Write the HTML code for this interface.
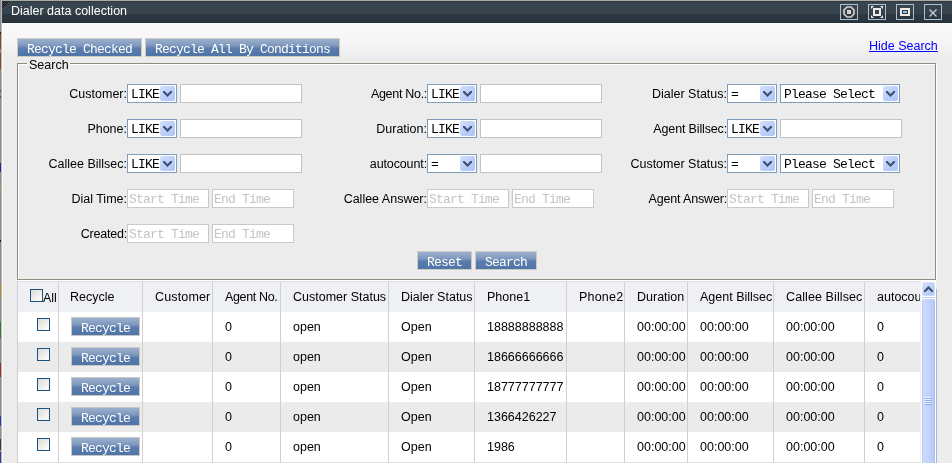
<!DOCTYPE html>
<html><head><meta charset="utf-8">
<style>
*{box-sizing:border-box;margin:0;padding:0}
html,body{width:952px;height:463px;overflow:hidden;background:#b8b8b8;font-family:"Liberation Sans",sans-serif;font-size:12.5px;color:#000}
.a{position:absolute}
#lb{left:0;top:0;width:2px;height:463px;background:linear-gradient(90deg,#8e8e8e 0,#8e8e8e 1px,#b9b9b9 1px)}
#topl{left:0;top:0;width:952px;height:1px;background:#aba9a6}
#tb{left:2px;top:1px;width:950px;height:22px;background:linear-gradient(180deg,#2f3b43 0,#2f3b43 1px,#38454e 1px,#36434c 13px,#2c373f 13px,#2a353d 21px,#222c33 21px)}
#tt{left:11px;top:1px;height:20px;line-height:20px;color:#fff;font-size:12.5px}
.ib{top:4px;width:18px;height:16px;border:1px solid #aebed3}
#body{left:2px;top:23px;width:950px;height:440px;border-top:1px solid #fcfcfc;border-left:1px solid #fcfcfc;background:linear-gradient(180deg,#f8f8f8 0,#f7f7f7 14px,#f0f0f0 28px,#ececec 36px,#ececec 100%)}
.btn{height:19px;border:1px solid #cfcbc3;background:linear-gradient(180deg,#9db1cd 0,#7d97bd 40%,#5b7dac 55%,#4f74a6 100%);color:#fff;font-family:"Liberation Mono",monospace;font-size:13px;letter-spacing:-0.8px;line-height:17px;padding-top:2px;text-align:center;white-space:pre}
#hs{left:869px;top:39px;color:#0000ff;text-decoration:underline;line-height:14px}
.fl{background:#8e8e80}
.fw{background:#fff}
.lab{margin-top:1px;height:19px;line-height:19px;text-align:right;white-space:nowrap}
.sel{height:19px;border:1px solid #7f9db9;background:#fff;font-family:"Liberation Mono",monospace;font-size:13px;letter-spacing:-0.8px;line-height:17px;padding-left:3px;padding-top:1px;white-space:pre;overflow:hidden}
.sel i{position:absolute;right:1px;top:1px;width:15px;height:15px;border-radius:2px;background:linear-gradient(135deg,#d3e0fd 0,#bccffa 50%,#adc5f6 100%)}
.sel i svg{position:absolute;left:0;top:0}
.inp{height:19px;border:1px solid #c3c3c3;background:#fff}
.dt{height:19px;width:82px;border:1px solid #c9c9c9;background:#fff;font-family:"Liberation Mono",monospace;font-size:13px;letter-spacing:-0.8px;line-height:17px;color:#c4c4c4;padding-left:1px;padding-top:1px;white-space:pre;overflow:hidden}
#tbl{left:17px;top:281px;width:903px;height:182px;background:#e2e2de;overflow:hidden;border-left:1px solid #d0d0d0}
.hd{left:0;top:1px;width:904px;height:30px;background:#eef0f4}
.row{left:0;width:904px;height:30px;background:#fff}
.g{background:#ebebeb}
.vl{top:1px;width:1px;height:182px;background:#d0d0d0}
.ht{top:1px;height:31px;line-height:31px;white-space:nowrap}
.ct{height:30px;line-height:30px;white-space:nowrap}
.cb{width:13px;height:13px;border:1px solid #1c5180;background:linear-gradient(135deg,#dcdcd7 0,#f4f4f2 70%,#fff 100%)}
.rb{width:69px;height:19px;border:1px solid #c8c8c8;background:linear-gradient(180deg,#9db1cd 0,#7d97bd 40%,#5b7dac 55%,#4f74a6 100%);color:#fff;font-family:"Liberation Mono",monospace;font-size:13px;letter-spacing:-0.8px;line-height:17px;padding-top:2px;text-align:center}
#sb{left:921px;top:281px;width:15px;height:182px;background:#eef0f4}
</style></head><body><div style="position:absolute;left:0;top:0;width:952px;height:463px;will-change:transform">
<div class="a" id="topl"></div>
<div class="a" id="lb"></div>
<div class="a" id="tb"></div>
<svg class="a" style="left:2px;top:1px" width="8" height="8" fill="#1b2024"><rect x="0" y="0" width="1" height="1"/><rect x="2" y="0" width="1" height="1"/><rect x="4" y="0" width="1" height="1"/><rect x="6" y="0" width="1" height="1"/><rect x="1" y="1" width="1" height="1"/><rect x="3" y="1" width="1" height="1"/><rect x="5" y="1" width="1" height="1"/><rect x="0" y="2" width="1" height="1"/><rect x="2" y="2" width="1" height="1"/><rect x="4" y="2" width="1" height="1"/><rect x="1" y="3" width="1" height="1"/><rect x="3" y="3" width="1" height="1"/><rect x="0" y="4" width="1" height="1"/><rect x="2" y="4" width="1" height="1"/><rect x="1" y="5" width="1" height="1"/><rect x="0" y="6" width="1" height="1"/></svg>
<div class="a" style="left:0;top:32px;width:1px;height:2px;background:#202020"></div><div class="a" style="left:0;top:34px;width:1px;height:15px;background:#8a4a1e"></div><div class="a" style="left:0;top:53px;width:1px;height:16px;background:#8a4a1e"></div><div class="a" style="left:0;top:90px;width:1px;height:2px;background:#3a5aa0"></div><div class="a" style="left:0;top:96px;width:1px;height:2px;background:#3a5aa0"></div><div class="a" style="left:0;top:163px;width:1px;height:9px;background:#2a2a90"></div><div class="a" style="left:0;top:184px;width:1px;height:7px;background:#a09070"></div><div class="a" style="left:0;top:240px;width:1px;height:2px;background:#202020"></div><div class="a" style="left:0;top:283px;width:1px;height:15px;background:#b08a30"></div><div class="a" style="left:0;top:322px;width:1px;height:17px;background:#3a7a3a"></div><div class="a" style="left:0;top:363px;width:1px;height:14px;background:#a02a2a"></div><div class="a" style="left:0;top:416px;width:1px;height:10px;background:#2a3aa0"></div><div class="a" style="left:0;top:439px;width:1px;height:11px;background:#3a3a3a"></div><div class="a" style="left:0;top:452px;width:1px;height:11px;background:#2a3aa0"></div>
<div class="a" id="tt">Dialer data collection</div>
<div class="a ib" style="left:840px"><svg width="16" height="14" class="a" style="left:0;top:0"><polygon points="6,2 10,2 13,5 13,9 10,12 6,12 3,9 3,5" fill="none" stroke="#d6cec9" stroke-width="1.7"/><rect x="6" y="5" width="4" height="4" fill="#d9d1cc"/></svg></div>
<div class="a ib" style="left:868px"><svg width="16" height="14" class="a" style="left:0;top:0"><rect x="5" y="4" width="6" height="6" fill="none" stroke="#ecebe8" stroke-width="2"/><path d="M2,1 L5,1 L2,4Z M14,1 L11,1 L14,4Z M2,13 L5,13 L2,10Z M14,13 L11,13 L14,10Z" fill="#ecebe8"/></svg></div>
<div class="a ib" style="left:896px"><svg width="16" height="14" class="a" style="left:0;top:0"><rect x="3" y="3" width="10" height="8" fill="#eeeae4"/><rect x="5" y="5" width="6" height="4" fill="#2e3a42"/><rect x="6" y="6" width="4" height="2" fill="#8ccaf0"/></svg></div>
<div class="a ib" style="left:924px"><svg width="16" height="14" class="a" style="left:0;top:0"><path d="M4.5,4.5 L11.5,11.5 M11.5,4.5 L4.5,11.5" stroke="#c8d2e2" stroke-width="1.3"/></svg></div>
<div class="a" id="body"></div>

<div class="a btn" style="left:17px;top:38px;width:125px">Recycle Checked</div>
<div class="a btn" style="left:145px;top:38px;width:195px">Recycle All By Conditions</div>
<div class="a" id="hs">Hide Search</div>

<!-- fieldset -->
<div class="a fl" style="left:17px;top:63px;width:10px;height:1px"></div>
<div class="a fl" style="left:70px;top:63px;width:866px;height:1px"></div>
<div class="a fw" style="left:18px;top:64px;width:9px;height:1px"></div>
<div class="a fw" style="left:70px;top:64px;width:865px;height:1px"></div>
<div class="a fl" style="left:17px;top:63px;width:1px;height:217px"></div>
<div class="a fw" style="left:18px;top:64px;width:1px;height:215px"></div>
<div class="a fl" style="left:935px;top:63px;width:1px;height:217px"></div>
<div class="a fw" style="left:936px;top:63px;width:1px;height:218px"></div>
<div class="a fl" style="left:17px;top:279px;width:919px;height:1px"></div>
<div class="a fw" style="left:17px;top:280px;width:920px;height:1px"></div>
<div class="a" style="left:29px;top:59px;line-height:13px">Search</div>

<!-- row 1 -->
<div class="a lab" style="left:0;width:127px;top:84px">Customer:</div>
<div class="a sel" style="left:127px;top:84px;width:50px">LIKE<i><svg width="15" height="15"><polygon points="3,5 4.5,5 7.5,8 10.5,5 12,5 12,6.5 7.5,11 3,6.5" fill="#3d4f72"/></svg></i></div>
<div class="a inp" style="left:180px;top:84px;width:122px"></div>
<div class="a lab" style="left:300px;width:127px;top:84px;letter-spacing:-0.3px">Agent No.:</div>
<div class="a sel" style="left:427px;top:84px;width:50px">LIKE<i><svg width="15" height="15"><polygon points="3,5 4.5,5 7.5,8 10.5,5 12,5 12,6.5 7.5,11 3,6.5" fill="#3d4f72"/></svg></i></div>
<div class="a inp" style="left:480px;top:84px;width:122px"></div>
<div class="a lab" style="left:600px;width:127px;top:84px">Dialer Status:</div>
<div class="a sel" style="left:727px;top:84px;width:50px">=<i><svg width="15" height="15"><polygon points="3,5 4.5,5 7.5,8 10.5,5 12,5 12,6.5 7.5,11 3,6.5" fill="#3d4f72"/></svg></i></div>
<div class="a sel" style="left:780px;top:84px;width:120px">Please Select<i><svg width="15" height="15"><polygon points="3,5 4.5,5 7.5,8 10.5,5 12,5 12,6.5 7.5,11 3,6.5" fill="#3d4f72"/></svg></i></div>

<!-- row 2 -->
<div class="a lab" style="left:0;width:127px;top:119px">Phone:</div>
<div class="a sel" style="left:127px;top:119px;width:50px">LIKE<i><svg width="15" height="15"><polygon points="3,5 4.5,5 7.5,8 10.5,5 12,5 12,6.5 7.5,11 3,6.5" fill="#3d4f72"/></svg></i></div>
<div class="a inp" style="left:180px;top:119px;width:122px"></div>
<div class="a lab" style="left:300px;width:127px;top:119px">Duration:</div>
<div class="a sel" style="left:427px;top:119px;width:50px">LIKE<i><svg width="15" height="15"><polygon points="3,5 4.5,5 7.5,8 10.5,5 12,5 12,6.5 7.5,11 3,6.5" fill="#3d4f72"/></svg></i></div>
<div class="a inp" style="left:480px;top:119px;width:122px"></div>
<div class="a lab" style="left:600px;width:127px;top:119px;letter-spacing:-0.15px">Agent Billsec:</div>
<div class="a sel" style="left:727px;top:119px;width:50px">LIKE<i><svg width="15" height="15"><polygon points="3,5 4.5,5 7.5,8 10.5,5 12,5 12,6.5 7.5,11 3,6.5" fill="#3d4f72"/></svg></i></div>
<div class="a inp" style="left:780px;top:119px;width:122px"></div>

<!-- row 3 -->
<div class="a lab" style="left:0;width:127px;top:154px">Callee Billsec:</div>
<div class="a sel" style="left:127px;top:154px;width:50px">LIKE<i><svg width="15" height="15"><polygon points="3,5 4.5,5 7.5,8 10.5,5 12,5 12,6.5 7.5,11 3,6.5" fill="#3d4f72"/></svg></i></div>
<div class="a inp" style="left:180px;top:154px;width:122px"></div>
<div class="a lab" style="left:300px;width:127px;top:154px;letter-spacing:-0.12px">autocount:</div>
<div class="a sel" style="left:427px;top:154px;width:50px">=<i><svg width="15" height="15"><polygon points="3,5 4.5,5 7.5,8 10.5,5 12,5 12,6.5 7.5,11 3,6.5" fill="#3d4f72"/></svg></i></div>
<div class="a inp" style="left:480px;top:154px;width:122px"></div>
<div class="a lab" style="left:600px;width:127px;top:154px">Customer Status:</div>
<div class="a sel" style="left:727px;top:154px;width:50px">=<i><svg width="15" height="15"><polygon points="3,5 4.5,5 7.5,8 10.5,5 12,5 12,6.5 7.5,11 3,6.5" fill="#3d4f72"/></svg></i></div>
<div class="a sel" style="left:780px;top:154px;width:120px">Please Select<i><svg width="15" height="15"><polygon points="3,5 4.5,5 7.5,8 10.5,5 12,5 12,6.5 7.5,11 3,6.5" fill="#3d4f72"/></svg></i></div>

<!-- row 4 -->
<div class="a lab" style="left:0;width:127px;top:189px">Dial Time:</div>
<div class="a dt" style="left:127px;top:189px">Start Time</div>
<div class="a dt" style="left:212px;top:189px">End Time</div>
<div class="a lab" style="left:300px;width:127px;top:189px">Callee Answer:</div>
<div class="a dt" style="left:427px;top:189px">Start Time</div>
<div class="a dt" style="left:512px;top:189px">End Time</div>
<div class="a lab" style="left:600px;width:127px;top:189px;letter-spacing:-0.17px">Agent Answer:</div>
<div class="a dt" style="left:727px;top:189px">Start Time</div>
<div class="a dt" style="left:812px;top:189px">End Time</div>

<!-- row 5 -->
<div class="a lab" style="left:0;width:127px;top:224px;letter-spacing:-0.2px">Created:</div>
<div class="a dt" style="left:127px;top:224px">Start Time</div>
<div class="a dt" style="left:212px;top:224px">End Time</div>

<div class="a btn" style="left:417px;top:251px;width:55px">Reset</div>
<div class="a btn" style="left:475px;top:251px;width:62px">Search</div>

<!-- table -->
<div class="a" id="tbl">
<div class="a hd"></div>
<div class="a row" style="top:31px"></div>
<div class="a row g" style="top:61px"></div>
<div class="a row" style="top:91px"></div>
<div class="a row g" style="top:121px"></div>
<div class="a row" style="top:151px"></div>
<div class="a vl" style="left:40px"></div>
<div class="a vl" style="left:124px"></div>
<div class="a vl" style="left:194px"></div>
<div class="a vl" style="left:262px"></div>
<div class="a vl" style="left:370px"></div>
<div class="a vl" style="left:456px"></div>
<div class="a vl" style="left:548px"></div>
<div class="a vl" style="left:606px"></div>
<div class="a vl" style="left:669px"></div>
<div class="a vl" style="left:755px"></div>
<div class="a vl" style="left:846px"></div>
<div class="a cb" style="left:12px;top:8px"></div>
<div class="a ht" style="left:25px;top:2px;letter-spacing:0">All</div>
<div class="a ht" style="left:52px">Recycle</div>
<div class="a ht" style="left:137px;letter-spacing:0.15px">Customer</div>
<div class="a ht" style="left:207px;letter-spacing:-0.35px">Agent No.</div>
<div class="a ht" style="left:275px">Customer Status</div>
<div class="a ht" style="left:383px">Dialer Status</div>
<div class="a ht" style="left:469px">Phone1</div>
<div class="a ht" style="left:561px;letter-spacing:0.2px">Phone2</div>
<div class="a ht" style="left:619px">Duration</div>
<div class="a ht" style="left:682px">Agent Billsec</div>
<div class="a ht" style="left:768px;letter-spacing:0.1px">Callee Billsec</div>
<div class="a ht" style="left:859px">autocount</div>
<div class="a cb" style="left:19px;top:37px"></div>
<div class="a rb" style="left:53px;top:36px">Recycle</div>
<div class="a ct" style="left:207px;top:31px">0</div>
<div class="a ct" style="left:275px;top:31px">open</div>
<div class="a ct" style="left:383px;top:31px">Open</div>
<div class="a ct" style="left:469px;top:31px">18888888888</div>
<div class="a ct" style="left:619px;top:31px">00:00:00</div>
<div class="a ct" style="left:682px;top:31px">00:00:00</div>
<div class="a ct" style="left:768px;top:31px">00:00:00</div>
<div class="a ct" style="left:859px;top:31px">0</div>
<div class="a cb" style="left:19px;top:67px"></div>
<div class="a rb" style="left:53px;top:66px">Recycle</div>
<div class="a ct" style="left:207px;top:61px">0</div>
<div class="a ct" style="left:275px;top:61px">open</div>
<div class="a ct" style="left:383px;top:61px">Open</div>
<div class="a ct" style="left:469px;top:61px">18666666666</div>
<div class="a ct" style="left:619px;top:61px">00:00:00</div>
<div class="a ct" style="left:682px;top:61px">00:00:00</div>
<div class="a ct" style="left:768px;top:61px">00:00:00</div>
<div class="a ct" style="left:859px;top:61px">0</div>
<div class="a cb" style="left:19px;top:97px"></div>
<div class="a rb" style="left:53px;top:96px">Recycle</div>
<div class="a ct" style="left:207px;top:91px">0</div>
<div class="a ct" style="left:275px;top:91px">open</div>
<div class="a ct" style="left:383px;top:91px">Open</div>
<div class="a ct" style="left:469px;top:91px">18777777777</div>
<div class="a ct" style="left:619px;top:91px">00:00:00</div>
<div class="a ct" style="left:682px;top:91px">00:00:00</div>
<div class="a ct" style="left:768px;top:91px">00:00:00</div>
<div class="a ct" style="left:859px;top:91px">0</div>
<div class="a cb" style="left:19px;top:127px"></div>
<div class="a rb" style="left:53px;top:126px">Recycle</div>
<div class="a ct" style="left:207px;top:121px">0</div>
<div class="a ct" style="left:275px;top:121px">open</div>
<div class="a ct" style="left:383px;top:121px">Open</div>
<div class="a ct" style="left:469px;top:121px">1366426227</div>
<div class="a ct" style="left:619px;top:121px">00:00:00</div>
<div class="a ct" style="left:682px;top:121px">00:00:00</div>
<div class="a ct" style="left:768px;top:121px">00:00:00</div>
<div class="a ct" style="left:859px;top:121px">0</div>
<div class="a cb" style="left:19px;top:157px"></div>
<div class="a rb" style="left:53px;top:156px">Recycle</div>
<div class="a ct" style="left:207px;top:151px">0</div>
<div class="a ct" style="left:275px;top:151px">open</div>
<div class="a ct" style="left:383px;top:151px">Open</div>
<div class="a ct" style="left:469px;top:151px">1986</div>
<div class="a ct" style="left:619px;top:151px">00:00:00</div>
<div class="a ct" style="left:682px;top:151px">00:00:00</div>
<div class="a ct" style="left:768px;top:151px">00:00:00</div>
<div class="a ct" style="left:859px;top:151px">0</div>
</div>
<div class="a" style="left:920px;top:281px;width:1px;height:182px;background:#f1f1ea"></div>
<div class="a" style="left:921px;top:281px;width:15px;height:182px;background:#fff"></div>
<div class="a" style="left:936px;top:289px;width:1px;height:174px;background:#a6b8d3"></div>
<div class="a" style="left:922px;top:282px;width:13px;height:14px;border-radius:2px;background:linear-gradient(135deg,#d4e0fd 0,#bfd1fa 50%,#afc6f6 100%);box-shadow:inset 0 0 0 1px rgba(255,255,255,0.25)"><svg width="13" height="14" class="a" style="left:0;top:0"><polygon points="2,10 3.5,10 6.5,7 9.5,10 11,10 11,8.5 6.5,4 2,8.5" fill="#3d4f72"/></svg></div>
<div class="a" style="left:922px;top:297px;width:13px;height:1px;background:#b9cbee"></div>
<div class="a" style="left:922px;top:299px;width:13px;height:164px;border-radius:2px 2px 0 0;border-left:1px solid #b3c6f4;border-right:1px solid #a8bef0;background:linear-gradient(90deg,#cdd9fd 0,#c4d2fc 55%,#b3cbf8 100%)"></div>
<div class="a" style="left:924px;top:397px;width:7px;height:1px;background:#eef3ff"></div>
<div class="a" style="left:925px;top:398px;width:7px;height:1px;background:#8eaef2"></div>
<div class="a" style="left:924px;top:399px;width:7px;height:1px;background:#eef3ff"></div>
<div class="a" style="left:925px;top:400px;width:7px;height:1px;background:#8eaef2"></div>
<div class="a" style="left:924px;top:401px;width:7px;height:1px;background:#eef3ff"></div>
<div class="a" style="left:925px;top:402px;width:7px;height:1px;background:#8eaef2"></div>
<div class="a" style="left:924px;top:403px;width:7px;height:1px;background:#eef3ff"></div>
<div class="a" style="left:925px;top:404px;width:7px;height:1px;background:#8eaef2"></div>
</div></body></html>
